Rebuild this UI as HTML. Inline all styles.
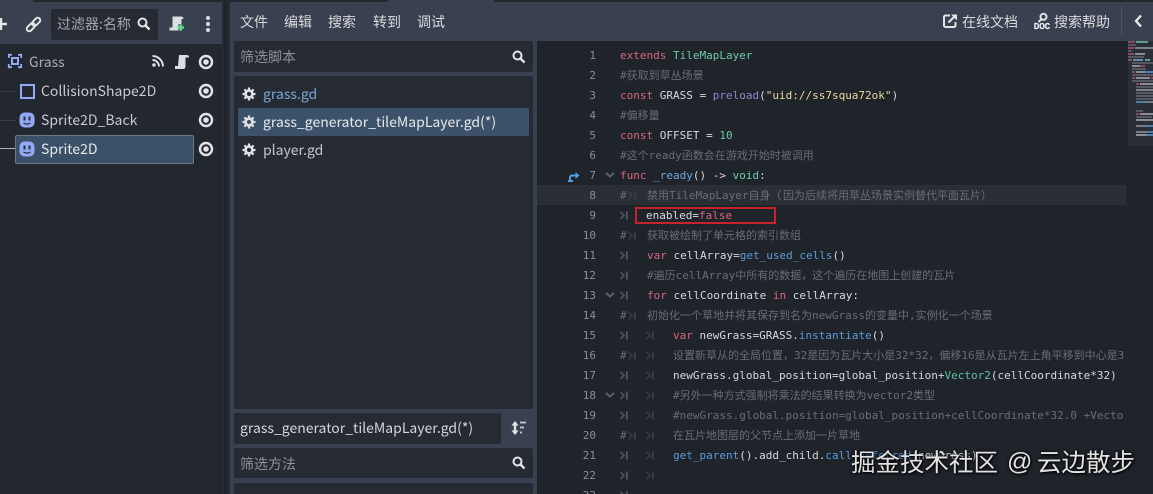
<!DOCTYPE html>
<html><head><meta charset="utf-8">
<style>
html,body{margin:0;padding:0;background:#3a4150;}
#r{position:relative;width:1153px;height:494px;overflow:hidden;background:#394050;font-family:"Noto Sans CJK SC","Liberation Sans",sans-serif;color:#d3d5d9;font-size:14px;}
.a{position:absolute;white-space:pre;}
.b{position:absolute;}
svg{position:absolute;overflow:visible;}
.t{line-height:20px;height:20px;}
.n{position:absolute;width:60px;left:536px;text-align:right;font:11px/20px "DejaVu Sans Mono",monospace;color:#8b8e93;height:20px;}
.c{position:absolute;font:11px/20px "DejaVu Sans Mono","Noto Sans CJK SC",monospace;color:#d6d8db;white-space:pre;height:20px;letter-spacing:0;}
.k{color:#d9657f}.g{color:#6fc9a8}.f{color:#5c9bd6}.m{color:#6f6f7f}.p{color:#8a8ac6}.v{color:#5fc2a0}.o{color:#7f7f7f;}
.cm{color:#6a6d72}
.q{position:absolute;height:2px;}
</style></head><body><div id="r">
<svg width="0" height="0" style="position:absolute"><defs>
<g id="tab"><path d="M0.5 1l3.500 3.500-3.500 3.500" fill="none" stroke="#565a60" stroke-width="1.500"/><path d="M6.800 0.500v8" stroke="#565a60" stroke-width="1.800"/></g>
<g id="tab2"><path d="M0.500 1l3.500 3.500-3.500 3.500" fill="none" stroke="#3a3e44" stroke-width="1.500"/><path d="M6.800 0.500v8" stroke="#3a3e44" stroke-width="1.800"/></g>
<g id="fold"><path d="M0 0l4 3.500 4-3.500" fill="none" stroke="#5b5f66" stroke-width="2"/></g>
<g id="eye"><circle cx="7" cy="7" r="6" fill="none" stroke="#e2e4e6" stroke-width="2.400"/><circle cx="7" cy="7" r="2.800" fill="#e2e4e6"/></g>
<g id="spr"><rect x="-0.500" y="-0.500" width="15" height="15" rx="5" fill="#92a9f5"/><rect x="3.500" y="3.500" width="2" height="4" fill="#2a2f3a"/><rect x="8.500" y="3.500" width="2" height="4" fill="#2a2f3a"/><path d="M3.500 10c2 1.500 5 1.500 7 0" stroke="#2a2f3a" fill="none" stroke-width="1.200"/></g>
<g id="gear"><circle cx="7" cy="7" r="3.400" fill="none" stroke="#dfe1e4" stroke-width="2.600"/><path d="M7 0.500v2.500M7 11v2.500M0.500 7h2.500M11 7h2.500M2.400 2.400l1.800 1.800M9.800 9.800l1.800 1.800M2.400 11.600l1.800-1.800M9.800 4.200l1.800-1.800" stroke="#dfe1e4" stroke-width="2.200"/></g>
<g id="mag"><circle cx="5.500" cy="5.500" r="4" fill="none" stroke="#e2e4e6" stroke-width="2"/><path d="M8.500 8.500l4 4" stroke="#e2e4e6" stroke-width="2.400"/></g>
</defs></svg>

<!-- frame -->
<div class="b" style="left:33px;top:0;width:1120px;height:2px;background:#23272e"></div>
<div class="b" style="left:388px;top:0;width:106px;height:2px;background:#394050"></div>
<div class="b" style="left:222px;top:0;width:8px;height:494px;background:#262b33"></div>
<div class="b" style="left:224px;top:0;width:3px;height:494px;background:#1f232a"></div>

<!-- left dock -->
<div class="b" style="left:0;top:44px;width:222px;height:450px;background:#23272f"></div>
<svg style="left:-6px;top:17px" width="14" height="14"><path d="M7 1v12M1 7h12" stroke="#e6e7e9" stroke-width="2.400"/></svg>
<svg style="left:26px;top:17px" width="15" height="15"><g transform="rotate(-45 7.500 7.500)" fill="none" stroke="#e2e4e6" stroke-width="2"><rect x="-1" y="5" width="9.500" height="5" rx="2.500"/><rect x="6.500" y="5" width="9.500" height="5" rx="2.500"/></g></svg>
<div class="b" style="left:51px;top:9px;width:107px;height:31px;background:#262b33;border-radius:2px"></div>
<div class="a" style="left:57px;top:14px;font-size:14px;line-height:21px;color:#a3a6ab">过滤器:名称</div>
<svg style="left:137px;top:17px" width="14" height="14"><use href="#mag"/></svg>
<svg style="left:169px;top:16px" width="16" height="16"><path d="M3.500 0.500h8.500a2.500 2.500 0 0 1 2.500 2.500h-2v5h-3v6.500H0.500v-3h3z" fill="#dcdee1"/><path d="M8.500 11.500h6.500M11.750 8.250v6.500" stroke="#5fd989" stroke-width="2.600"/></svg>
<div class="b" style="left:206px;top:16px;width:4px;height:4px;border-radius:2px;background:#dcdee1"></div>
<div class="b" style="left:206px;top:22px;width:4px;height:4px;border-radius:2px;background:#dcdee1"></div>
<div class="b" style="left:206px;top:28px;width:4px;height:4px;border-radius:2px;background:#dcdee1"></div>

<svg style="left:8px;top:54px" width="14" height="14"><path d="M0.800 4V0.800H4M10 0.800h3.200V4M13.200 10v3.200H10M4 13.200H0.800V10" fill="none" stroke="#92a9f5" stroke-width="1.800"/><rect x="4" y="4" width="6" height="6" fill="none" stroke="#92a9f5" stroke-width="2"/></svg>
<div class="a t" style="left:29px;top:52px;color:#a9acb0">Grass</div>
<svg style="left:152px;top:55px" width="12" height="12"><circle cx="2" cy="10" r="1.800" fill="#dcdee1"/><path d="M0.500 5a6.500 6.500 0 0 1 6.500 6.500M0.500 1a10.500 10.500 0 0 1 10.500 10.500" fill="none" stroke="#dcdee1" stroke-width="2"/></svg>
<svg style="left:175px;top:55px" width="14" height="14"><path d="M4 0h8a2 2 0 0 1 2 2.500h-3.500v8.500c0 2-1 3-2 3H0v-3h3z" fill="#dcdee1"/></svg>
<svg style="left:199px;top:55px" width="14" height="14"><use href="#eye"/></svg>

<div class="b" style="left:0;top:91px;width:16px;height:1px;background:#3a3f47"></div>
<div class="b" style="left:0;top:120px;width:16px;height:1px;background:#3a3f47"></div>
<div class="b" style="left:0;top:148px;width:16px;height:1px;background:#b0b3b8"></div>
<div class="b" style="left:20px;top:84px;width:11px;height:11px;border:2px solid #92a9f5"></div>
<div class="a t" style="left:41px;top:81px;color:#c8cacd">CollisionShape2D</div>
<svg style="left:199px;top:84px" width="14" height="14"><use href="#eye"/></svg>
<svg style="left:20px;top:113px" width="14" height="14"><use href="#spr"/></svg>
<div class="a t" style="left:41px;top:110px;color:#c8cacd">Sprite2D_Back</div>
<svg style="left:199px;top:113px" width="14" height="14"><use href="#eye"/></svg>
<div class="b" style="left:15px;top:135px;width:177px;height:27px;background:#3a5068;border:1px solid #6c7a88;border-radius:2px"></div>
<svg style="left:20px;top:142px" width="14" height="14"><use href="#spr"/></svg>
<div class="a t" style="left:41px;top:139px;color:#e6e8ea">Sprite2D</div>
<svg style="left:199px;top:142px" width="14" height="14"><use href="#eye"/></svg>

<!-- center -->
<div class="a" style="left:240px;top:12px;line-height:20px;font-size:14px;color:#d8dadd">文件</div>
<div class="a" style="left:284px;top:12px;line-height:20px;font-size:14px;color:#d8dadd">编辑</div>
<div class="a" style="left:328px;top:12px;line-height:20px;font-size:14px;color:#d8dadd">搜索</div>
<div class="a" style="left:373px;top:12px;line-height:20px;font-size:14px;color:#d8dadd">转到</div>
<div class="a" style="left:417px;top:12px;line-height:20px;font-size:14px;color:#d8dadd">调试</div>

<div class="b" style="left:234px;top:41px;width:299px;height:31px;background:#262b33;border-radius:2px"></div>
<div class="a" style="left:240px;top:47px;line-height:20px;font-size:14px;color:#8d9096">筛选脚本</div>
<svg style="left:512px;top:50px" width="14" height="14"><use href="#mag"/></svg>
<div class="b" style="left:234px;top:76px;width:299px;height:333px;background:#262b33;border-radius:2px"></div>
<div class="b" style="left:238px;top:108px;width:291px;height:28px;background:#3b526a;border-radius:2px"></div>
<svg style="left:242px;top:87px" width="14" height="14"><use href="#gear"/></svg>
<svg style="left:242px;top:115px" width="14" height="14"><use href="#gear"/></svg>
<svg style="left:242px;top:143px" width="14" height="14"><use href="#gear"/></svg>
<div class="a t" style="left:263px;top:84px;color:#79a5d2">grass.gd</div>
<div class="a t" style="left:263px;top:112px;color:#e6e8ea">grass_generator_tileMapLayer.gd(*)</div>
<div class="a t" style="left:263px;top:140px;color:#c4c6ca">player.gd</div>

<div class="b" style="left:234px;top:413px;width:267px;height:31px;background:#262b33;border-radius:2px"></div>
<div class="a t" style="left:240px;top:418px;color:#d3d5d9">grass_generator_tileMapLayer.gd(*)</div>
<svg style="left:511px;top:420px" width="15" height="16"><path d="M4 1L0.500 5.500h7zM4 15L0.500 10.500h7z" fill="#e2e4e6"/><path d="M4 4v8" stroke="#e2e4e6" stroke-width="2.400"/><path d="M9 2.500h6M9 7.500h4M9 12.500h2" stroke="#c8cbcf" stroke-width="1.800"/></svg>
<div class="b" style="left:234px;top:448px;width:299px;height:30px;background:#262b33;border-radius:2px"></div>
<div class="a" style="left:240px;top:454px;line-height:20px;font-size:14px;color:#8d9096">筛选方法</div>
<svg style="left:512px;top:456px" width="14" height="14"><use href="#mag"/></svg>
<div class="b" style="left:234px;top:483px;width:299px;height:11px;background:#262b33;border-radius:2px"></div>

<!-- right toolbar -->
<svg style="left:943px;top:14px" width="14" height="14"><path d="M7 1.500H2.500a1.500 1.500 0 0 0-1.500 1.500v8.500a1.500 1.500 0 0 0 1.500 1.500h8.500a1.500 1.500 0 0 0 1.500-1.500V8" fill="none" stroke="#e2e4e6" stroke-width="2"/><path d="M5.500 8.500L11 3" stroke="#e2e4e6" stroke-width="2.200"/><path d="M8 0.500h6v6z" fill="#e2e4e6"/></svg>
<div class="a" style="left:962px;top:12px;line-height:20px;font-size:14px;color:#d8dadd">在线文档</div>
<svg style="left:1034px;top:13px" width="16" height="17"><circle cx="9.500" cy="3.800" r="3" fill="none" stroke="#e2e4e6" stroke-width="2"/><path d="M7.500 6L4.500 9" stroke="#e2e4e6" stroke-width="2"/><text x="0" y="16" font-family="Liberation Sans,sans-serif" font-weight="700" font-size="8" textLength="16" lengthAdjust="spacingAndGlyphs" fill="#f2f3f5" stroke="#f2f3f5" stroke-width="0.300">DOC</text></svg>
<div class="a" style="left:1054px;top:12px;line-height:20px;font-size:14px;color:#d8dadd">搜索帮助</div>
<div class="b" style="left:1121px;top:6px;width:1px;height:30px;background:#4d5461"></div>
<svg style="left:1134px;top:14px" width="9" height="14"><path d="M7 1.500L2 7l5 5.500" fill="none" stroke="#e6e7e9" stroke-width="2.400"/></svg>

<!-- editor -->
<div class="b" style="left:537px;top:41px;width:616px;height:453px;background:#1f232a"></div>
<div class="b" style="left:537px;top:185px;width:589px;height:20px;background:#2a2e35"></div>
<div class="b" style="left:1128px;top:41px;width:25px;height:105px;background:#2a2e36"></div>
<!-- minimap -->
<div class="q" style="left:1128px;top:41px;width:7px;background:#8a4a62"></div><div class="q" style="left:1136px;top:41px;width:12px;background:#5c9c88"></div>
<div class="q" style="left:1128px;top:44px;width:8px;background:#55585f"></div>
<div class="q" style="left:1128px;top:47px;width:6px;background:#8a4a62"></div><div class="q" style="left:1135px;top:47px;width:18px;background:#7a7f86"></div>
<div class="q" style="left:1128px;top:50px;width:4px;background:#55585f"></div>
<div class="q" style="left:1128px;top:53px;width:6px;background:#8a4a62"></div><div class="q" style="left:1135px;top:53px;width:10px;background:#8a8e94"></div>
<div class="q" style="left:1128px;top:56px;width:16px;background:#55585f"></div>
<div class="q" style="left:1128px;top:59px;width:4px;background:#8a4a62"></div><div class="q" style="left:1133px;top:59px;width:10px;background:#6a8aa8"></div><div class="q" style="left:1145px;top:59px;width:5px;background:#5c9c88"></div>
<div class="q" style="left:1132px;top:62px;width:21px;background:#55585f"></div>
<div class="q" style="left:1132px;top:65px;width:8px;background:#8a8e94"></div><div class="q" style="left:1140px;top:65px;width:5px;background:#8a4a62"></div>
<div class="q" style="left:1132px;top:68px;width:14px;background:#55585f"></div>
<div class="q" style="left:1132px;top:71px;width:3px;background:#8a4a62"></div><div class="q" style="left:1136px;top:71px;width:9px;background:#8a8e94"></div><div class="q" style="left:1145px;top:71px;width:8px;background:#4e7ea8"></div>
<div class="q" style="left:1132px;top:74px;width:21px;background:#55585f"></div>
<div class="q" style="left:1132px;top:77px;width:3px;background:#8a4a62"></div><div class="q" style="left:1136px;top:77px;width:14px;background:#8a8e94"></div><div class="q" style="left:1151px;top:77px;width:2px;background:#8a4a62"></div>
<div class="q" style="left:1132px;top:80px;width:21px;background:#55585f"></div>
<div class="q" style="left:1136px;top:83px;width:3px;background:#8a4a62"></div><div class="q" style="left:1140px;top:83px;width:13px;background:#8a8e94"></div>
<div class="q" style="left:1136px;top:86px;width:17px;background:#55585f"></div>
<div class="q" style="left:1136px;top:89px;width:17px;background:#7a7f86"></div>
<div class="q" style="left:1136px;top:92px;width:17px;background:#55585f"></div>
<div class="q" style="left:1136px;top:95px;width:17px;background:#5a5d63"></div>
<div class="q" style="left:1136px;top:98px;width:17px;background:#55585f"></div>
<div class="q" style="left:1136px;top:101px;width:9px;background:#4e7ea8"></div><div class="q" style="left:1145px;top:101px;width:8px;background:#7a7f86"></div>
<div class="q" style="left:1136px;top:110px;width:7px;background:#55585f"></div>
<div class="q" style="left:1136px;top:113px;width:3px;background:#8a4a62"></div><div class="q" style="left:1140px;top:113px;width:13px;background:#8a8e94"></div>
<div class="q" style="left:1136px;top:116px;width:16px;background:#55585f"></div>
<div class="q" style="left:1136px;top:119px;width:17px;background:#8a8e94"></div>
<div class="q" style="left:1136px;top:125px;width:10px;background:#7a7f86"></div><div class="q" style="left:1146px;top:125px;width:7px;background:#4e7ea8"></div>
<div class="q" style="left:1136px;top:131px;width:10px;background:#7a7f86"></div><div class="q" style="left:1146px;top:131px;width:7px;background:#4e7ea8"></div>
<div class="q" style="left:1136px;top:134px;width:10px;background:#8a8e94"></div><div class="q" style="left:1146px;top:134px;width:7px;background:#4e7ea8"></div>

<!-- line numbers -->
<div class="n" style="top:46px">1</div><div class="n" style="top:66px">2</div><div class="n" style="top:86px">3</div><div class="n" style="top:106px">4</div><div class="n" style="top:126px">5</div><div class="n" style="top:146px">6</div><div class="n" style="top:166px">7</div><div class="n" style="top:186px">8</div><div class="n" style="top:206px">9</div><div class="n" style="top:226px">10</div><div class="n" style="top:246px">11</div><div class="n" style="top:266px">12</div><div class="n" style="top:286px">13</div><div class="n" style="top:306px">14</div><div class="n" style="top:326px">15</div><div class="n" style="top:346px">16</div><div class="n" style="top:366px">17</div><div class="n" style="top:386px">18</div><div class="n" style="top:406px">19</div><div class="n" style="top:426px">20</div><div class="n" style="top:446px">21</div><div class="n" style="top:466px">22</div><div class="n" style="top:486px">23</div>

<svg style="left:568px;top:171px" width="12" height="11"><path d="M2 10V6.500a2 2 0 0 1 2-2h4" fill="none" stroke="#4f9fe0" stroke-width="2"/><path d="M7.500 1l4 3.500-4 3.500z" fill="#4f9fe0"/><path d="M0 10h5" stroke="#4f9fe0" stroke-width="2"/></svg>
<svg style="left:606px;top:173px" width="8" height="5"><use href="#fold"/></svg>
<svg style="left:606px;top:293px" width="8" height="5"><use href="#fold"/></svg>
<svg style="left:606px;top:393px" width="8" height="5"><use href="#fold"/></svg>

<!-- tab glyphs col1 -->
<svg style="left:620px;top:211px" width="9" height="9"><use href="#tab"/></svg>
<svg style="left:620px;top:251px" width="9" height="9"><use href="#tab"/></svg>
<svg style="left:620px;top:271px" width="9" height="9"><use href="#tab"/></svg>
<svg style="left:620px;top:291px" width="9" height="9"><use href="#tab"/></svg>
<svg style="left:620px;top:331px" width="9" height="9"><use href="#tab"/></svg>
<svg style="left:620px;top:371px" width="9" height="9"><use href="#tab"/></svg>
<svg style="left:620px;top:391px" width="9" height="9"><use href="#tab"/></svg>
<svg style="left:620px;top:411px" width="9" height="9"><use href="#tab"/></svg>
<svg style="left:620px;top:451px" width="9" height="9"><use href="#tab"/></svg>
<svg style="left:620px;top:471px" width="9" height="9"><use href="#tab"/></svg>
<svg style="left:620px;top:491px" width="9" height="9"><use href="#tab"/></svg>
<svg style="left:628px;top:191px" width="9" height="9"><use href="#tab2"/></svg>
<svg style="left:628px;top:231px" width="9" height="9"><use href="#tab2"/></svg>
<svg style="left:628px;top:311px" width="9" height="9"><use href="#tab2"/></svg>
<svg style="left:628px;top:351px" width="9" height="9"><use href="#tab2"/></svg>
<svg style="left:628px;top:431px" width="9" height="9"><use href="#tab2"/></svg>
<!-- tab glyphs col2 -->
<svg style="left:646px;top:331px" width="9" height="9"><use href="#tab2"/></svg>
<svg style="left:646px;top:351px" width="9" height="9"><use href="#tab2"/></svg>
<svg style="left:646px;top:371px" width="9" height="9"><use href="#tab2"/></svg>
<svg style="left:646px;top:391px" width="9" height="9"><use href="#tab2"/></svg>
<svg style="left:646px;top:411px" width="9" height="9"><use href="#tab2"/></svg>
<svg style="left:646px;top:431px" width="9" height="9"><use href="#tab2"/></svg>
<svg style="left:646px;top:451px" width="9" height="9"><use href="#tab2"/></svg>
<svg style="left:646px;top:471px" width="9" height="9"><use href="#tab2"/></svg>

<!-- code -->
<div class="c" style="left:620px;top:46px"><span class="k">extends</span> <span class="g">TileMapLayer</span></div>
<div class="c cm" style="left:620px;top:66px">#获取到草丛场景</div>
<div class="c" style="left:620px;top:86px"><span class="k">const</span> GRASS = <span class="p">preload</span>(<span style="color:#e8d9a0">"uid://ss7squa72ok"</span>)</div>
<div class="c cm" style="left:620px;top:106px">#偏移量</div>
<div class="c" style="left:620px;top:126px"><span class="k">const</span> OFFSET = <span class="g">10</span></div>
<div class="c cm" style="left:620px;top:146px">#这个ready函数会在游戏开始时被调用</div>
<div class="c" style="left:620px;top:166px"><span class="k">func</span> <span style="color:#6ea6d6">_ready</span>() -&gt; <span class="g">void</span>:</div>
<div class="c cm" style="left:620px;top:186px">#</div>
<div class="c cm" style="left:647px;top:186px">禁用TileMapLayer自身<span style="letter-spacing:1.500px">（</span>因为后续将用草丛场景实例替代平面瓦片<span style="letter-spacing:1.500px">）</span></div>
<div class="c" style="left:646px;top:206px">enabled=<span class="k">false</span></div>
<div class="c cm" style="left:620px;top:226px">#</div>
<div class="c cm" style="left:647px;top:226px">获取被绘制了单元格的索引数组</div>
<div class="c" style="left:647px;top:246px"><span class="k">var</span> cellArray=<span class="f">get_used_cells</span>()</div>
<div class="c cm" style="left:647px;top:266px">#遍历cellArray中所有的数据，这个遍历在地图上创建的瓦片</div>
<div class="c" style="left:647px;top:286px"><span class="k">for</span> cellCoordinate <span class="k">in</span> cellArray:</div>
<div class="c cm" style="left:620px;top:306px">#</div>
<div class="c cm" style="left:647px;top:306px">初始化一个草地并将其保存到名为newGrass的变量中,实例化一个场景</div>
<div class="c" style="left:673px;top:326px"><span class="k">var</span> newGrass=GRASS.<span class="f">instantiate</span>()</div>
<div class="c cm" style="left:620px;top:346px">#</div>
<div class="c cm" style="left:673px;top:346px">设置新草从的全局位置，32是因为瓦片大小是32*32，偏移16是从瓦片左上角平移到中心是3</div>
<div class="c" style="left:673px;top:366px">newGrass.global_position=global_position+<span class="v">Vector2</span>(cellCoordinate*32)</div>
<div class="c cm" style="left:673px;top:386px">#另外一种方式强制将乘法的结果转换为vector2类型</div>
<div class="c cm" style="left:673px;top:406px">#newGrass.global.position=global_position+cellCoordinate*32.0 +Vecto</div>
<div class="c cm" style="left:620px;top:426px">#</div>
<div class="c cm" style="left:673px;top:426px">在瓦片地图层的父节点上添加一片草地</div>
<div class="c" style="left:673px;top:446px"><span class="f">get_parent</span>().add_child.<span class="f">call_deferred</span>(newGrass)</div>

<div class="b" style="left:635px;top:207px;width:137px;height:13px;border:2px solid #c8232c"></div>

<div class="a" style="left:851px;top:446px;font-size:24.500px;line-height:32px;color:#e2e2e2;text-shadow:0 0 3px #000,1px 1px 2px #000">掘金技术社区</div>
<div class="a" style="left:1007px;top:446px;font-size:25px;line-height:32px;font-family:'Liberation Sans',sans-serif;color:#e2e2e2;text-shadow:0 0 3px #000,1px 1px 2px #000">@</div>
<div class="a" style="left:1037px;top:446px;font-size:24.500px;line-height:32px;color:#e2e2e2;text-shadow:0 0 3px #000,1px 1px 2px #000">云边散步</div>
</div></body></html>
